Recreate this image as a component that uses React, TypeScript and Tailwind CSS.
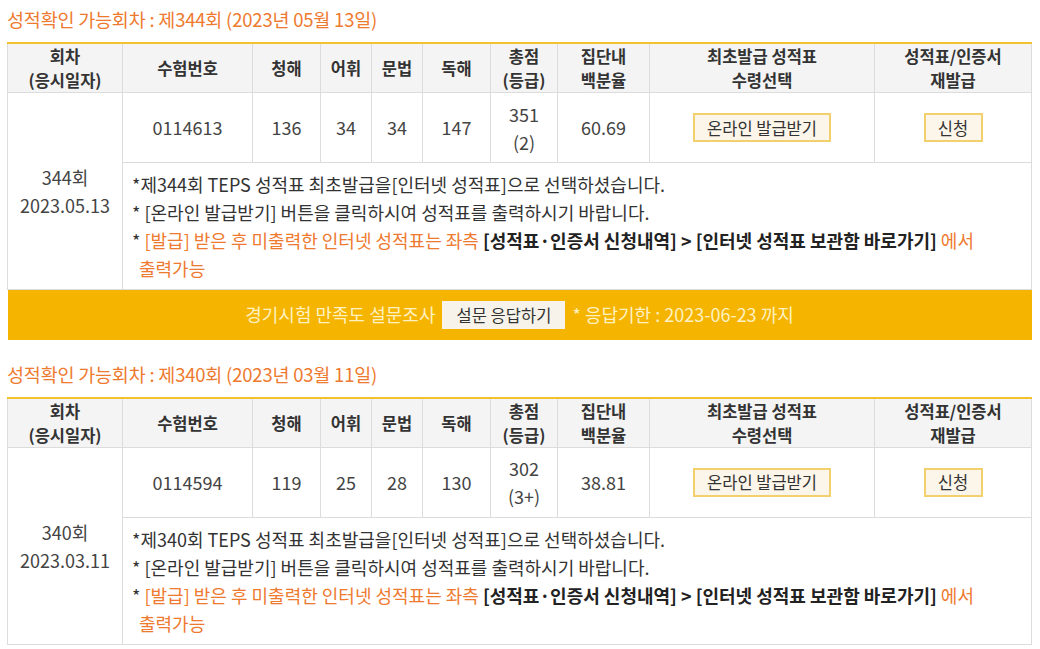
import React from "react";

type Round = {
  no: number;
  titleDate: string;
  date: string;
  examId: string;
  listening: number;
  vocab: number;
  grammar: number;
  reading: number;
  total: number;
  grade: string;
  percentile: string;
};

const rounds: Round[] = [
  {
    no: 344,
    titleDate: "2023년 05월 13일",
    date: "2023.05.13",
    examId: "0114613",
    listening: 136,
    vocab: 34,
    grammar: 34,
    reading: 147,
    total: 351,
    grade: "2",
    percentile: "60.69",
  },
  {
    no: 340,
    titleDate: "2023년 03월 11일",
    date: "2023.03.11",
    examId: "0114594",
    listening: 119,
    vocab: 25,
    grammar: 28,
    reading: 130,
    total: 302,
    grade: "3+",
    percentile: "38.81",
  },
];

const th = "border-l border-[#dcdcdc] first:border-l-0 px-1 text-center align-middle font-bold text-[16.5px] leading-[24px] text-[#333]";
const td = "border-l border-[#dcdcdc] first:border-l-0 text-center align-middle text-[18px] text-[#444]";

const ScoreTable = ({ r, survey }: { r: Round; survey?: boolean }) => (
  <div>
    <h3 className="text-[18.5px] leading-[24px] text-[#ee7a2f] tracking-[-0.2px]">
      성적확인 가능회차 : 제{r.no}회 ({r.titleDate})
    </h3>
    <table className="mt-[11px] w-[1024px] table-fixed border-collapse border-t-2 border-[#f3c32f]">
      <colgroup>
        <col className="w-[115px]" />
        <col className="w-[130px]" />
        <col className="w-[68px]" />
        <col className="w-[51px]" />
        <col className="w-[51px]" />
        <col className="w-[68px]" />
        <col className="w-[67px]" />
        <col className="w-[92px]" />
        <col className="w-[225px]" />
        <col className="w-[157px]" />
      </colgroup>
      <thead>
        <tr className="h-[49px] bg-[#f4f4f4] border-x border-b border-[#dcdcdc]">
          <th className={th}>회차<br />(응시일자)</th>
          <th className={th}>수험번호</th>
          <th className={th}>청해</th>
          <th className={th}>어휘</th>
          <th className={th}>문법</th>
          <th className={th}>독해</th>
          <th className={th}>총점<br />(등급)</th>
          <th className={th}>집단내<br />백분율</th>
          <th className={th}>최초발급 성적표<br />수령선택</th>
          <th className={th}>성적표/인증서<br />재발급</th>
        </tr>
      </thead>
      <tbody>
        <tr className="h-[70px] border-x border-b border-[#dcdcdc]">
          <td rowSpan={2} className={`${td} leading-[28px] text-[#333]`}>
            {r.no}회<br />{r.date}
          </td>
          <td className={td}>{r.examId}</td>
          <td className={td}>{r.listening}</td>
          <td className={td}>{r.vocab}</td>
          <td className={td}>{r.grammar}</td>
          <td className={td}>{r.reading}</td>
          <td className={`${td} leading-[28px]`}>
            {r.total}<br />({r.grade})
          </td>
          <td className={td}>{r.percentile}</td>
          <td className={td}>
            <button className="h-[29px] w-[138px] border-2 border-[#f3d06e] bg-[#fbf5ea] text-[16.5px] leading-[24px] text-[#333]">
              온라인 발급받기
            </button>
          </td>
          <td className={td}>
            <button className="h-[29px] w-[59px] border-2 border-[#f3d06e] bg-[#fbf5ea] text-[16.5px] leading-[24px] text-[#333]">
              신청
            </button>
          </td>
        </tr>
        <tr className="border-x border-b border-[#dcdcdc]">
          <td colSpan={9} className="border-l border-[#dcdcdc] pl-[9px] pr-2 py-[7px] text-left text-[18px] leading-[28px] text-[#333]">
            <p>*제{r.no}회 TEPS 성적표 최초발급을[인터넷 성적표]으로 선택하셨습니다.</p>
            <p>* [온라인 발급받기] 버튼을 클릭하시여 성적표를 출력하시기 바랍니다.</p>
            <p>
              * <span className="text-[#ee7a2f]">[발급] 받은 후 미출력한 인터넷 성적표는 좌측 </span>
              <b className="text-[#222]">[성적표·인증서 신청내역] &gt; [인터넷 성적표 보관함 바로가기]</b>
              <span className="text-[#ee7a2f]"> 에서</span>
              <br />
              <span className="pl-[7px] text-[#ee7a2f]">출력가능</span>
            </p>
          </td>
        </tr>
        {survey && (
          <tr className="h-[50px] bg-[#f5b400]">
            <td colSpan={10} className="text-center align-middle">
              <div className="flex items-center justify-center gap-[7px] text-[18px] text-[#fff1c2]">
                <span>경기시험 만족도 설문조사</span>
                <button className="h-[28px] w-[123px] bg-[#f7f3ea] text-[16.5px] leading-[24px] text-[#333]">설문 응답하기</button>
                <span>* 응답기한 : 2023-06-23 까지</span>
              </div>
            </td>
          </tr>
        )}
      </tbody>
    </table>
  </div>
);

export default function App() {
  return (
    <div className="min-h-[649px] w-[1040px] bg-white pl-[7px] pt-[7px] font-['Noto_Sans_CJK_KR',sans-serif]">
      <ScoreTable r={rounds[0]} survey />
      <div className="mt-[22px]">
        <ScoreTable r={rounds[1]} />
      </div>
    </div>
  );
}
